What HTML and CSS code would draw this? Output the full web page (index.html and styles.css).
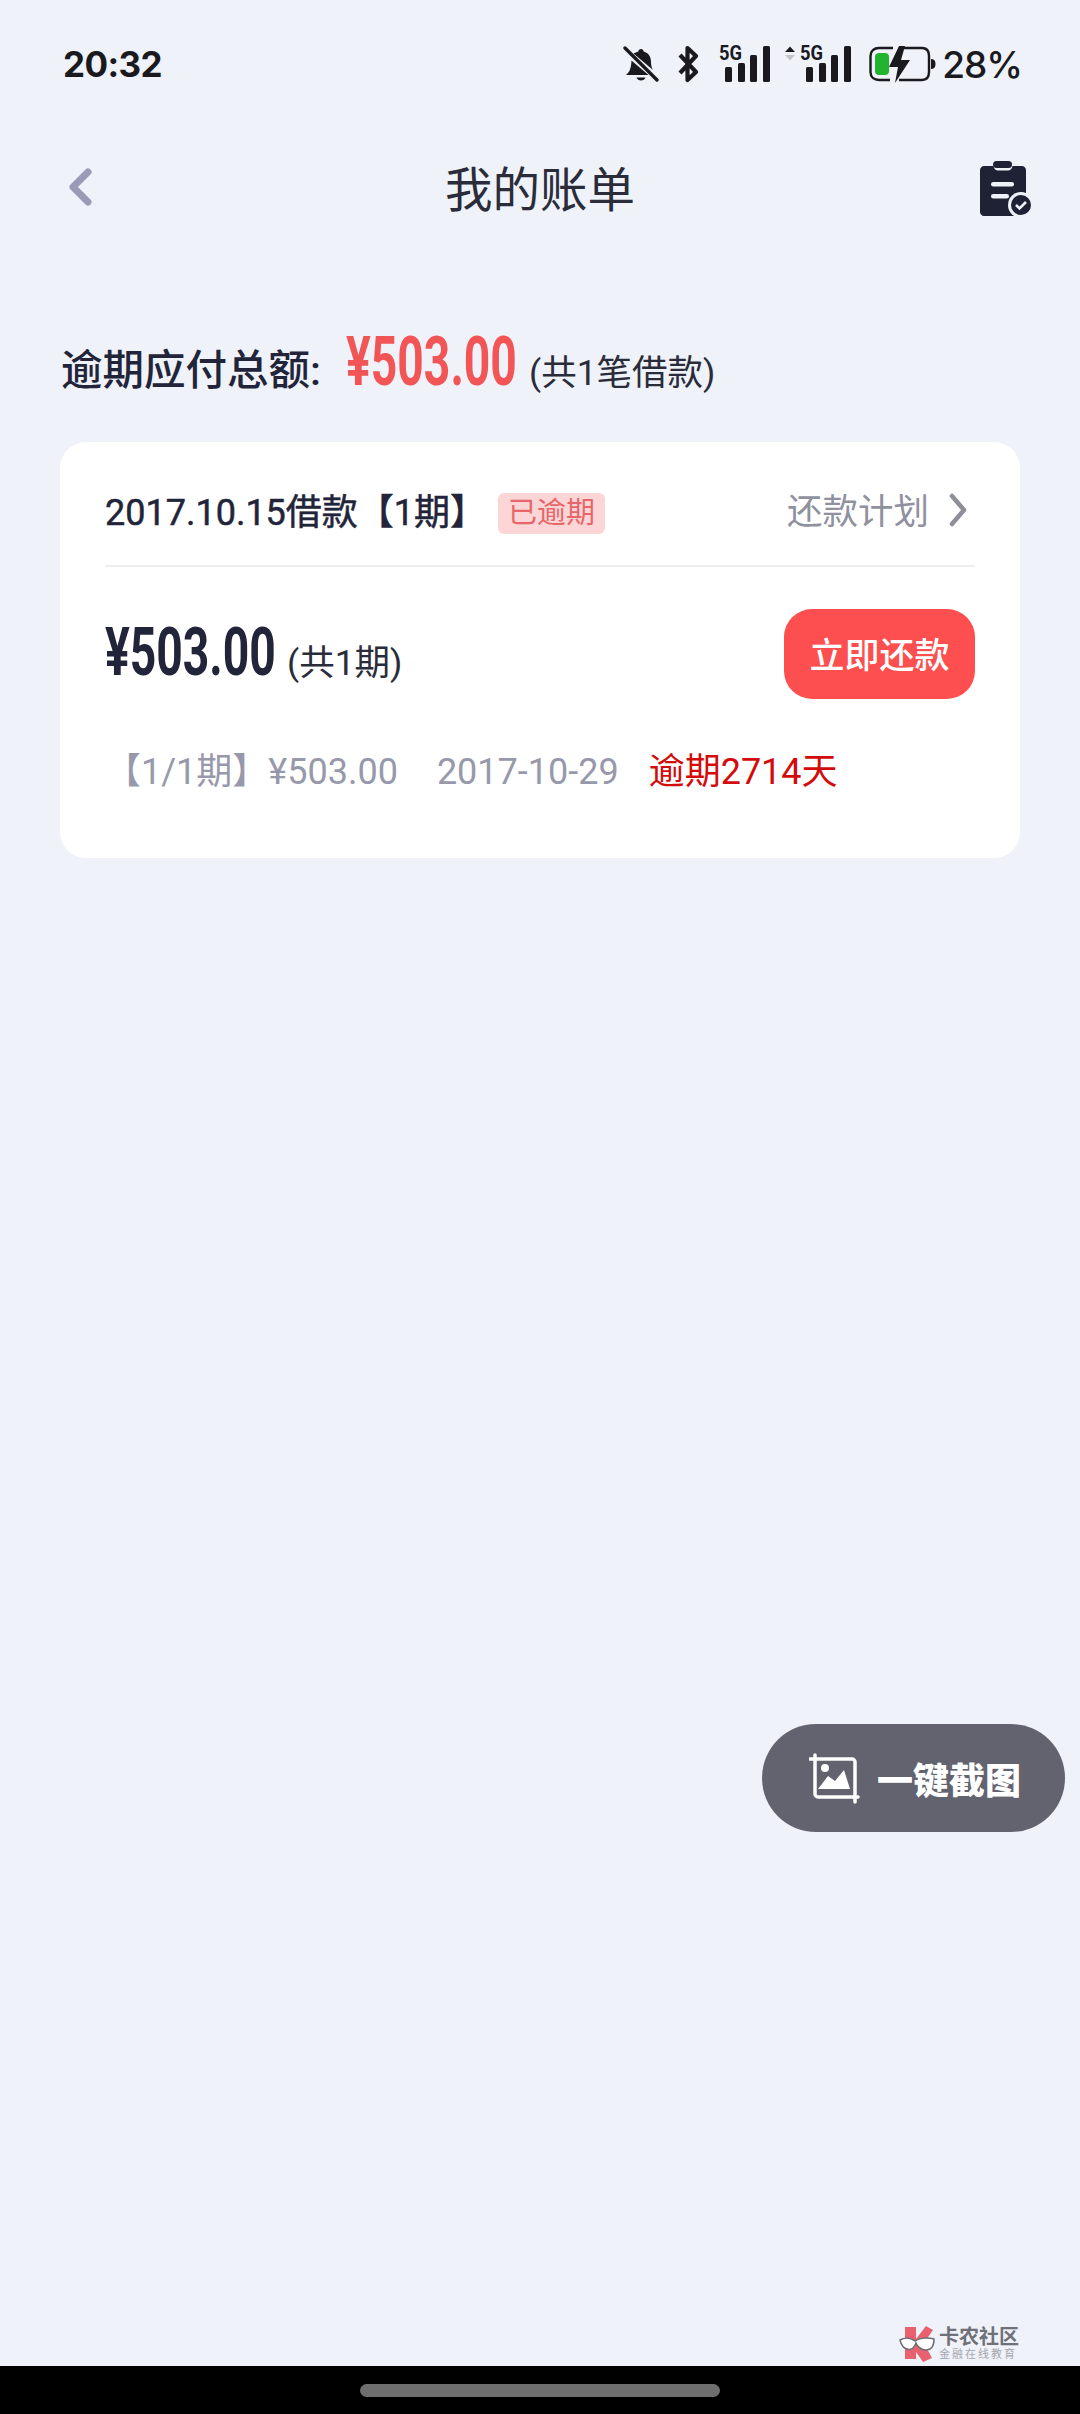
FILE: index.html
```html
<!DOCTYPE html>
<html lang="zh-CN">
<head>
    <meta charset="utf-8">
    <title>我的账单</title>
    <link rel="stylesheet" href="styles.css">
</head>
<body>
<div class="page">
    <div class="status-bar">
        <span class="time">20:32</span>
        <div class="status-icons">
            <svg class="ic-bell" width="36" height="36" viewBox="0 0 36 36">
                <path d="M18 3c1.600 0 2.500 1 2.700 2.400 5 1.400 7.300 5.500 7.300 10.600 0 2.500.5 6 2 8l-19.500-16.500C12 6.800 13.800 5.900 15.300 5.400 15.500 4 16.400 3 18 3z" fill="#1a1a1e"/>
                <path d="M8.500 14.500 25.500 29H3c2.800-2.500 5-5 5.500-14.500z" fill="#1a1a1e"/>
                <path d="M13.500 31.500h9c-.6 1.800-2.500 3-4.500 3s-3.900-1.200-4.500-3z" fill="#1a1a1e"/>
                <path d="M2 2 34 34" stroke="#1a1a1e" stroke-width="3.400" stroke-linecap="round"/>
            </svg>
            <svg class="ic-bt" width="22" height="38" viewBox="0 0 22 38">
                <path d="M3 10 19 27 10.500 35V3L19 11 3 28" fill="none" stroke="#1a1a1e" stroke-width="4.200" stroke-linejoin="round"/>
            </svg>
            <svg class="ic-signal" width="52" height="50" viewBox="0 -6 52 50">
                <text class="net-label" x="0" y="15" textLength="23" lengthAdjust="spacingAndGlyphs">5G</text>
                <rect x="6" y="22" width="7" height="15" rx="1.500"/>
                <rect x="19" y="18" width="7" height="19" rx="1.500"/>
                <rect x="31" y="10" width="7" height="27" rx="1.500"/>
                <rect x="44" y="1" width="7" height="36" rx="1.500"/>
            </svg>
            <svg class="ic-signal2" width="67" height="50" viewBox="0 -6 67 50">
                <path d="M0 7 5 1.500 10 7z" fill="#1a1a1e"/>
                <path d="M0 10 5 15.500 10 10z" fill="#c4c4c8"/>
                <text class="net-label" x="15" y="15" textLength="23" lengthAdjust="spacingAndGlyphs">5G</text>
                <rect x="21" y="22" width="7" height="15" rx="1.500"/>
                <rect x="34" y="18" width="7" height="19" rx="1.500"/>
                <rect x="46" y="10" width="7" height="27" rx="1.500"/>
                <rect x="59" y="1" width="7" height="36" rx="1.500"/>
            </svg>
            <svg class="ic-battery" width="67" height="38" viewBox="0 0 67 38">
                <path d="M21 35H10C5 35 1.500 32 1.500 27V11C1.500 6 5 3 10 3H24" fill="none" stroke="#1a1a1e" stroke-width="2.400"/>
                <path d="M35 3H53c4.500 0 7 3 7 8v16c0 5-2.500 8-7 8H30" fill="none" stroke="#1a1a1e" stroke-width="2.400"/>
                <path d="M62 14c3 0 4.500 1.500 4.500 5s-1.500 5-4.500 5z" fill="#1a1a1e"/>
                <rect x="6" y="8" width="14" height="22" rx="4" fill="#22b32f"/>
                <path d="M30 1 20 22H29L26 38 41 15H32L36 1z" fill="#1a1a1e"/>
            </svg>
            <span class="battery-text">28%</span>
        </div>
    </div>

    <div class="nav">
        <svg class="back" width="24" height="38" viewBox="0 0 24 38">
            <path d="M20 4 5 19 20 34" fill="none" stroke="#9a9bb6" stroke-width="7" stroke-linecap="round" stroke-linejoin="round"/>
        </svg>
        <span class="nav-title">我的账单</span>
        <svg class="bills" width="56" height="58" viewBox="0 0 56 58">
            <path d="M4 5h9.500c.5 3 2.500 4.500 4.500 4.500h10c2 0 4-1.500 4.500-4.500H42c2 0 4 2 4 4v42c0 2-2 4-4 4H4c-2 0-4-2-4-4V9c0-2 2-4 4-4z" fill="#1f2235" transform="translate(1 0)"/>
            <rect x="14" y="0" width="19" height="7" rx="3.500" fill="#1f2235"/>
            <rect x="12" y="21" width="23" height="4.500" rx="2.200" fill="#eff2f9"/>
            <rect x="12" y="33" width="18" height="4.500" rx="2.200" fill="#eff2f9"/>
            <circle cx="42" cy="44" r="13" fill="#eff2f9"/>
            <circle cx="42" cy="44" r="10" fill="#1f2235"/>
            <path d="M37 44l3.500 3.500 6.500-6.500" fill="none" stroke="#eff2f9" stroke-width="2.600"/>
        </svg>
    </div>

    <div class="summary">
        <span class="summary-label">逾期应付总额:</span>
        <span class="summary-amount">¥503.00</span>
        <span class="count">(共1笔借款)</span>
    </div>

    <div class="card">
        <div class="card-head">
            <span class="loan-title">2017.10.15借款【1期】</span>
            <span class="badge">已逾期</span>
            <span class="plan-link">还款计划</span>
            <svg class="plan-arrow" width="18" height="34" viewBox="0 0 18 34">
                <path d="M3 3 15 17 3 31" fill="none" stroke="#8e8f98" stroke-width="4.500" stroke-linecap="round" stroke-linejoin="round"/>
            </svg>
        </div>
        <div class="card-main">
            <span class="card-amount">¥503.00</span>
            <span class="count">(共1期)</span>
            <button class="pay-btn">立即还款</button>
        </div>
        <div class="card-detail">
            <span class="detail-term">【1/1期】¥503.00</span>
            <span class="detail-date">2017-10-29</span>
            <span class="detail-late">逾期2714天</span>
        </div>
    </div>

    <div class="spacer"></div>

    <div class="home-bar"><div class="home-pill"></div></div>

    <div class="shot-btn">
        <svg width="52" height="52" viewBox="0 0 52 52">
            <path d="M6 3V42a3 3 0 0 0 3 3H49" fill="none" stroke="#fff" stroke-width="3.500" stroke-linecap="round"/>
            <path d="M1 7H43a3 3 0 0 1 3 3V50" fill="none" stroke="#fff" stroke-width="3.500" stroke-linecap="round"/>
            <circle cx="16" cy="16" r="4" fill="#fff"/>
            <path d="M9 37 19 24l7 5 9-11 6 19z" fill="#fff"/>
        </svg>
        <span>一键截图</span>
    </div>

    <div class="watermark">
        <svg width="38" height="38" viewBox="0 0 38 38">
            <path d="M6 2H17V14L27 1 34 5 25 18 33 33 24 37 17 27V34H6z" fill="#e9616e"/>
            <path d="M1 15C6 12 12 13 16 16 20 13 28 12 35 14 35 20 33 25 27 25 22 25 18 21 17 18 16 22 12 26 8 24 4 23 2 19 1 15z" fill="#fff" stroke="#6d6e76" stroke-width="1.500"/>
        </svg>
        <div class="wm-text">
            <div class="wm-name">卡农社区</div>
            <div class="wm-sub">金融在线教育</div>
        </div>
    </div>
</div>
</body>
</html>
```

FILE: styles.css
```css
* {
    box-sizing: border-box;
}
body {
    margin: 0;
    font-family: Roboto, "Noto Sans CJK SC", sans-serif;
    background-color: #eff2f9;
}
.page {
    position: relative;
    display: flex;
    flex-direction: column;
    width: 1080px;
    height: 2414px;
    overflow: hidden;
}
.status-bar {
    display: flex;
    justify-content: space-between;
    align-items: center;
    height: 128px;
    padding: 0 58px 0 63px;
    font-family: Inter, sans-serif;
    color: #1a1a1e;
}
.time {
    font-size: 35px;
    font-weight: 700;
    letter-spacing: -0.6px;
}
.status-icons {
    display: flex;
    align-items: center;
}
.status-icons svg {
    fill: #1a1a1e;
}
.ic-bell {
    margin-right: 18px;
}
.ic-bt {
    margin-right: 20px;
}
.ic-signal {
    margin-right: 14px;
}
.ic-signal2 {
    margin-right: 17px;
}
.ic-battery {
    margin-right: 6px;
}
.net-label {
    font-family: Roboto, sans-serif;
    font-size: 20px;
    font-weight: 700;
}
.battery-text {
    font-size: 37px;
    font-weight: 500;
    letter-spacing: -1px;
}
.nav {
    display: grid;
    grid-template-columns: 1fr auto 1fr;
    align-items: center;
    height: 124px;
    padding: 0 47px;
}
.back {
    margin: 0 0 6px 21px;
}
.nav-title {
    padding-bottom: 8px;
    font-size: 47.500px;
    color: #2a2c3a;
}
.bills {
    justify-self: end;
    margin-right: -2px;
}
.summary {
    display: flex;
    align-items: baseline;
    margin-top: 70px;
    padding-left: 61px;
    height: 120px;
    color: #22243a;
}
.summary-label {
    font-size: 41.500px;
    font-weight: 500;
    width: 285px;
}
.summary-amount {
    display: inline-block;
    width: 183px;
    font-size: 68px;
    font-weight: 700;
    color: #f25555;
    transform: scaleX(0.68);
    transform-origin: left;
}
.count {
    font-size: 35.500px;
    color: #2a2c3a;
}
.card {
    margin: 0 60px;
    height: 416px;
    padding: 0 45px;
    background: #fff;
    border-radius: 26px;
}
.card-head {
    display: flex;
    align-items: center;
    height: 125px;
    padding-top: 10px;
    border-bottom: 2px solid #eeeef2;
}
.loan-title {
    font-size: 36px;
    font-weight: 400;
    -webkit-text-stroke: 0.5px #22243a;
    color: #22243a;
    width: 393px;
}
.badge {
    margin-top: 9px;
    padding: 0 10px;
    height: 41px;
    line-height: 40px;
    font-size: 29px;
    color: #e8666a;
    background: #fcd6d6;
    border-radius: 6px;
}
.plan-link {
    margin-left: auto;
    font-size: 35.500px;
    color: #8f919e;
}
.plan-arrow {
    margin: 2px 8px 0 20px;
}
.card-main {
    display: flex;
    align-items: baseline;
    height: 129px;
    padding-top: 43px;
}
.card-amount {
    display: inline-block;
    width: 182px;
    margin-top: 3px;
    font-size: 67px;
    font-weight: 700;
    color: #22243a;
    transform: scaleX(0.69);
    transform-origin: left;
}
.pay-btn {
    margin-left: auto;
    width: 191px;
    height: 90px;
    align-self: flex-start;
    margin-top: -1px;
    padding-bottom: 5px;
    border: none;
    border-radius: 28px;
    background: #fd4f4f;
    color: #fff;
    font-family: inherit;
    font-size: 35px;
    font-weight: 500;
}
.card-detail {
    display: flex;
    align-items: baseline;
    padding-top: 46px;
    font-size: 36px;
    color: #9799ab;
}
.detail-term {
    margin-right: 39px;
}
.detail-late {
    margin-left: 30px;
    color: #d40b0b;
}
.spacer {
    flex: 1;
}
.home-bar {
    display: flex;
    justify-content: center;
    align-items: center;
    height: 48px;
    background: #000;
}
.home-pill {
    width: 360px;
    height: 13px;
    background: #6e6e6e;
    border-radius: 7px;
}
/* floats above the page content */
.shot-btn {
    position: absolute;
    left: 762px;
    top: 1724px;
    display: flex;
    align-items: center;
    gap: 16px;
    width: 303px;
    height: 108px;
    padding-left: 47px;
    background: #62636f;
    border-radius: 54px;
    color: #fff;
    font-size: 36px;
    font-weight: 900;
}
.watermark {
    position: absolute;
    left: 899px;
    top: 2325px;
    display: flex;
    gap: 2px;
}
.wm-text {
    padding-top: 1px;
}
.wm-name {
    font-size: 20px;
    line-height: 22px;
    font-weight: 700;
    color: #6f7078;
}
.wm-sub {
    font-size: 11px;
    line-height: 14px;
    letter-spacing: 2px;
    color: #a5a6ae;
}
```
